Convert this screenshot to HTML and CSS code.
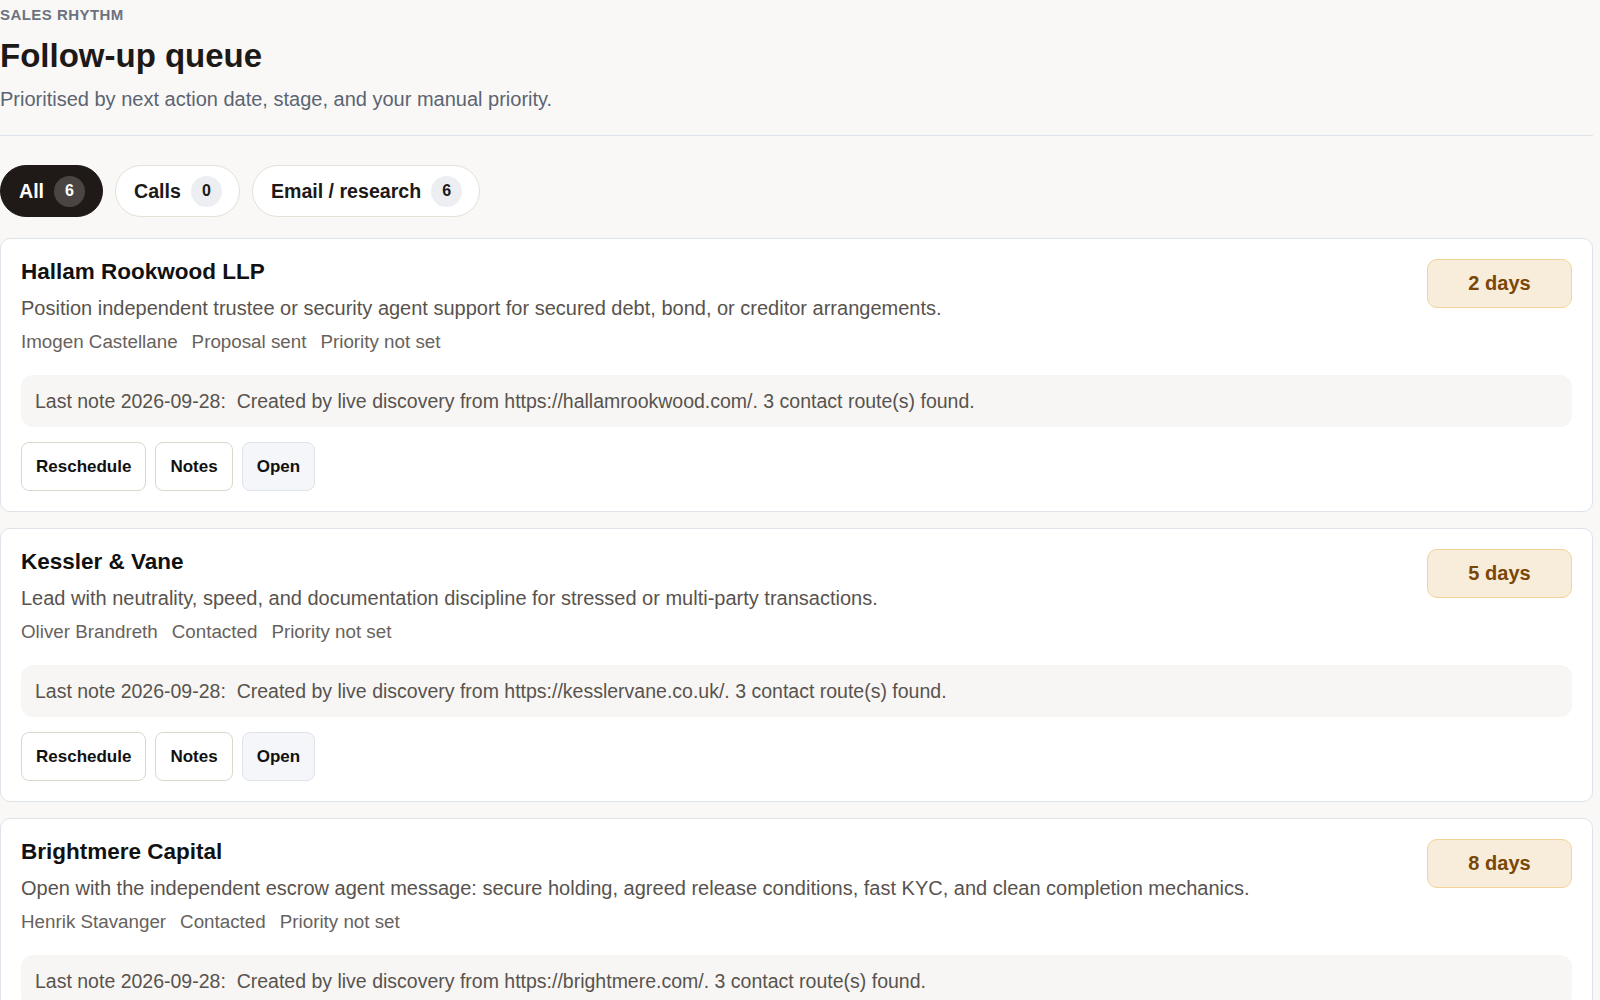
FILE: index.html
```html
<!DOCTYPE html>
<html lang="en">
<head>
<meta charset="utf-8">
<title>Follow-up queue</title>
<link rel="stylesheet" href="styles.css">
</head>
<body>
<main class="page">
  <header class="head">
    <div class="eyebrow">SALES RHYTHM</div>
    <h1 class="title">Follow-up queue</h1>
    <p class="subtitle">Prioritised by next action date, stage, and your manual priority.</p>
  </header>

  <nav class="tabs">
    <button class="tab tab-active"><span>All</span><span class="count">6</span></button>
    <button class="tab"><span>Calls</span><span class="count">0</span></button>
    <button class="tab"><span>Email / research</span><span class="count">6</span></button>
  </nav>

  <section class="list">
    <article class="card">
      <div class="card-top">
        <div class="card-info">
          <h2 class="name">Hallam Rookwood LLP</h2>
          <p class="desc">Position independent trustee or security agent support for secured debt, bond, or creditor arrangements.</p>
          <div class="meta"><span>Imogen Castellane</span><span>Proposal sent</span><span>Priority not set</span></div>
        </div>
        <div class="due">2 days</div>
      </div>
      <div class="note">Last note 2026-09-28:&nbsp; Created by live discovery from https://hallamrookwood.com/. 3 contact route(s) found.</div>
      <div class="actions">
        <button class="btn">Reschedule</button>
        <button class="btn">Notes</button>
        <button class="btn btn-open">Open</button>
      </div>
    </article>

    <article class="card">
      <div class="card-top">
        <div class="card-info">
          <h2 class="name">Kessler &amp; Vane</h2>
          <p class="desc">Lead with neutrality, speed, and documentation discipline for stressed or multi-party transactions.</p>
          <div class="meta"><span>Oliver Brandreth</span><span>Contacted</span><span>Priority not set</span></div>
        </div>
        <div class="due">5 days</div>
      </div>
      <div class="note">Last note 2026-09-28:&nbsp; Created by live discovery from https://kesslervane.co.uk/. 3 contact route(s) found.</div>
      <div class="actions">
        <button class="btn">Reschedule</button>
        <button class="btn">Notes</button>
        <button class="btn btn-open">Open</button>
      </div>
    </article>

    <article class="card">
      <div class="card-top">
        <div class="card-info">
          <h2 class="name">Brightmere Capital</h2>
          <p class="desc">Open with the independent escrow agent message: secure holding, agreed release conditions, fast KYC, and clean completion mechanics.</p>
          <div class="meta"><span>Henrik Stavanger</span><span>Contacted</span><span>Priority not set</span></div>
        </div>
        <div class="due">8 days</div>
      </div>
      <div class="note">Last note 2026-09-28:&nbsp; Created by live discovery from https://brightmere.com/. 3 contact route(s) found.</div>
      <div class="actions">
        <button class="btn">Reschedule</button>
        <button class="btn">Notes</button>
        <button class="btn btn-open">Open</button>
      </div>
    </article>
  </section>
</main>
</body>
</html>
```

FILE: styles.css
```css
* { box-sizing: border-box; }

html, body {
  margin: 0;
  padding: 0;
  background: #f9f8f6;
  font-family: "Liberation Sans", Arial, sans-serif;
  color: #1c1917;
}

.page {
  width: 1593px;
  padding: 0;
}

.head {
  padding-top: 6px;
  padding-bottom: 23px;
  border-bottom: 1px solid #dfe3ea;
}

.eyebrow {
  font-size: 15px;
  font-weight: 700;
  letter-spacing: 0.03em;
  color: #6b7280;
  line-height: 18px;
}

.title {
  margin: 12px 0 0;
  font-size: 33px;
  font-weight: 700;
  line-height: 40px;
  color: #1c1917;
}

.subtitle {
  margin: 10px 0 0;
  font-size: 20px;
  line-height: 26px;
  color: #5b6472;
}

.tabs {
  display: flex;
  gap: 12px;
  padding-top: 29px;
}

.tab {
  display: inline-flex;
  align-items: center;
  gap: 10px;
  height: 52px;
  padding: 0 17px 0 18px;
  border-radius: 26px;
  border: 1px solid #e6e0d6;
  background: #ffffff;
  font-family: inherit;
  font-size: 19.6px;
  font-weight: 700;
  color: #1c1917;
}

.tab-active {
  background: #1f1a17;
  border-color: #1f1a17;
  color: #ffffff;
}

.count {
  display: inline-flex;
  align-items: center;
  justify-content: center;
  width: 31px;
  height: 31px;
  border-radius: 50%;
  background: #eceef1;
  font-size: 16px;
  font-weight: 700;
  color: #1c1917;
}

.tab-active .count {
  background: #4a4542;
  color: #ffffff;
}

.list {
  display: flex;
  flex-direction: column;
  gap: 16px;
  padding-top: 21px;
}

.card {
  background: #ffffff;
  border: 1px solid #dfe3ea;
  border-radius: 10px;
  padding: 20px;
}

.card-top {
  display: flex;
  justify-content: space-between;
  align-items: flex-start;
  gap: 20px;
}

.name {
  margin: 0;
  font-size: 22.5px;
  font-weight: 700;
  line-height: 26px;
  color: #111111;
}

.desc {
  margin: 9px 0 0;
  font-size: 20px;
  line-height: 28px;
  color: #58534e;
}

.meta {
  display: flex;
  gap: 14px;
  margin-top: 7px;
  font-size: 18.8px;
  line-height: 26px;
  color: #67625d;
}

.due {
  flex: none;
  width: 145px;
  height: 49px;
  display: flex;
  align-items: center;
  justify-content: center;
  background: #f8ecda;
  border: 1px solid #f4d39a;
  border-radius: 10px;
  font-size: 20px;
  font-weight: 700;
  color: #7a4706;
}

.note {
  margin-top: 20px;
  padding: 12px 14px;
  background: #f7f6f4;
  border-radius: 12px;
  font-size: 19.5px;
  line-height: 28px;
  color: #58534e;
}

.actions {
  display: flex;
  gap: 9px;
  margin-top: 15px;
}

.btn {
  height: 49px;
  padding: 0 14px;
  background: #ffffff;
  border: 1px solid #ddd6cb;
  border-radius: 8px;
  font-family: inherit;
  font-size: 17px;
  font-weight: 700;
  color: #111111;
}

.btn-open {
  background: #f4f6f9;
  border-color: #dfe3ea;
}
```
